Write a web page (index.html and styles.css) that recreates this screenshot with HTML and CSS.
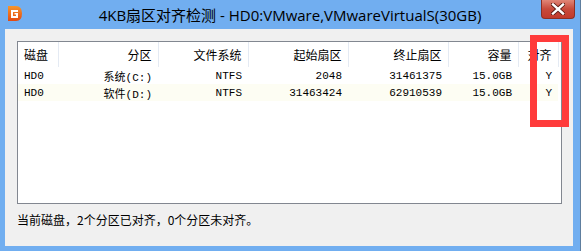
FILE: index.html
```html
<!DOCTYPE html>
<html lang="zh-CN">
<head>
    <meta charset="UTF-8">
    <title>4KB扇区对齐检测</title>
    <link rel="stylesheet" href="styles.css">
</head>
<body>
    <div class="window">
        <div class="titlebar">
            <svg class="app-icon" width="16" height="17" viewBox="0 0 16 17">
                <defs>
                    <linearGradient id="og" x1="0" y1="0" x2="0" y2="1">
                        <stop offset="0" stop-color="#f7962c"/>
                        <stop offset="1" stop-color="#e24a12"/>
                    </linearGradient>
                </defs>
                <path d="M1 1 H9 Q15 1 15 8.5 Q15 16 9 16 H1 Z" fill="url(#og)"/>
                <path d="M4 5 H11 V7 H6 V11 H9 V9.5 H7.5 V8 H11 V13 H4 Z" fill="#fff"/>
            </svg>
            <div class="title">4KB扇区对齐检测 - HD0:VMware,VMwareVirtualS(30GB)</div>
            <div class="close-btn">
                <svg width="14" height="12" viewBox="0 0 14 12">
                    <path d="M2 1.5 L12 10.5 M12 1.5 L2 10.5" stroke="#5a1a12" stroke-width="4.2" stroke-linecap="square"/>
                    <path d="M2 1.5 L12 10.5 M12 1.5 L2 10.5" stroke="#fff" stroke-width="2.4" stroke-linecap="square"/>
                </svg>
            </div>
        </div>
        <div class="client">
            <div class="list">
                <table class="grid">
                    <colgroup>
                        <col style="width:40px">
                        <col style="width:100px">
                        <col style="width:90px">
                        <col style="width:100px">
                        <col style="width:100px">
                        <col style="width:70px">
                        <col style="width:40px">
                    </colgroup>
                    <thead>
                        <tr>
                            <th class="left">磁盘</th>
                            <th>分区</th>
                            <th>文件系统</th>
                            <th>起始扇区</th>
                            <th>终止扇区</th>
                            <th>容量</th>
                            <th>对齐</th>
                        </tr>
                    </thead>
                    <tbody>
                        <tr>
                            <td class="left">HD0</td>
                            <td>系统(C:)</td>
                            <td>NTFS</td>
                            <td>2048</td>
                            <td>31461375</td>
                            <td>15.0GB</td>
                            <td>Y</td>
                        </tr>
                        <tr class="alt">
                            <td class="left">HD0</td>
                            <td>软件(D:)</td>
                            <td>NTFS</td>
                            <td>31463424</td>
                            <td>62910539</td>
                            <td>15.0GB</td>
                            <td>Y</td>
                        </tr>
                    </tbody>
                </table>
            </div>
            <div class="status">当前磁盘，2个分区已对齐，0个分区未对齐。</div>
        </div>
    </div>
    <div class="mark"></div>
</body>
</html>
```

FILE: styles.css
```css
body {
    margin: 0;
    width: 581px;
    height: 251px;
    overflow: hidden;
    position: relative;
}

.window {
    width: 581px;
    height: 251px;
    background-color: #71aef0;
    display: flex;
    flex-direction: column;
    box-sizing: border-box;
    border-right: 1px solid #5e7e9e;
}

.titlebar {
    height: 29px;
    position: relative;
    display: flex;
    align-items: center;
    justify-content: center;
    flex-shrink: 0;
}

.app-icon {
    position: absolute;
    left: 7px;
    top: 5px;
}

.title {
    font-family: "Open Sans", "Noto Sans CJK SC", sans-serif;
    font-size: 15px;
    color: #000;
    margin-top: -1px;
}

.close-btn {
    position: absolute;
    right: 5px;
    top: 0;
    width: 34px;
    height: 19px;
    box-sizing: border-box;
    background: linear-gradient(#e08677, #c74a3b 50%, #c13a2c);
    border: 1px solid #8d3024;
    border-top: none;
    border-radius: 0 0 4px 4px;
    display: flex;
    align-items: center;
    justify-content: center;
}

.client {
    flex: 1;
    margin: 0 7px 5px 5px;
    background-color: #f0f0f0;
    padding: 12px 0 0 12px;
    display: flex;
    flex-direction: column;
}

.list {
    width: 545px;
    height: 163px;
    box-sizing: border-box;
    border: 1px solid #828790;
    background-color: #fff;
}

.grid {
    border-collapse: collapse;
    table-layout: fixed;
    width: 540px;
}

.grid th {
    height: 25px;
    padding: 0 6px 0 0;
    text-align: right;
    font-family: "Noto Sans CJK SC", sans-serif;
    font-size: 12px;
    font-weight: normal;
    color: #000;
    border-right: 1px solid #e4eaf3;
    box-sizing: border-box;
    white-space: nowrap;
}

.grid td {
    height: 17px;
    padding: 0 6px 0 0;
    text-align: right;
    font-family: "Liberation Mono", "Noto Sans CJK SC", monospace;
    font-size: 11px;
    color: #000;
    white-space: nowrap;
}

.grid .left {
    text-align: left;
    padding: 0 0 0 6px;
}

.grid tr.alt td {
    background-color: #fdfdf3;
}

.status {
    margin-top: 8px;
    font-family: "Noto Sans CJK SC", sans-serif;
    font-size: 12px;
    line-height: 16px;
    color: #000;
}

.mark {
    position: absolute;
    left: 530px;
    top: 35px;
    width: 39px;
    height: 92px;
    box-sizing: border-box;
    border: 7px solid #ff3b3b;
}
```
